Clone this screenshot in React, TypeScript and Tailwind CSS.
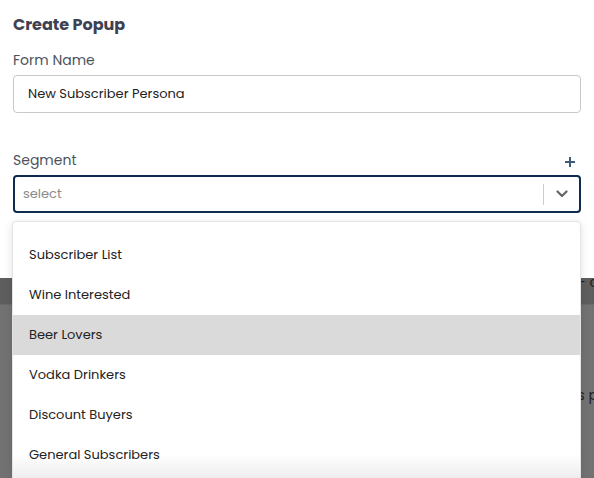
import React from "react";

const segments = [
  "Subscriber List",
  "Wine Interested",
  "Beer Lovers",
  "Vodka Drinkers",
  "Discount Buyers",
  "General Subscribers",
];

function Chevron() {
  return (
    <svg width="12" height="8" viewBox="0 0 12 8" fill="none">
      <path d="M1.5 1.5 6 6l4.5-4.5" stroke="#666" strokeWidth="2.2" strokeLinecap="round" strokeLinejoin="round" />
    </svg>
  );
}

function Plus() {
  return (
    <svg width="12" height="12" viewBox="0 0 12 12" fill="none">
      <path d="M6 1v10M1 6h10" stroke="#3e5a78" strokeWidth="2" />
    </svg>
  );
}

export default function App() {
  const font = { fontFamily: "Poppins, Inter, 'Noto Sans', sans-serif" };
  return (
    <div className="relative w-[594px] h-[478px] overflow-hidden bg-white" style={font}>
      {/* form card */}
      <div className="h-[278px] bg-white px-[13px] pt-[14px]">
        <h1 className="text-[16px] leading-[22px] font-bold text-[#3d4152]">Create Popup</h1>
        <label className="mt-[15px] block text-[14px] leading-[18px] text-[#4b5260]">Form Name</label>
        <div className="mt-[6px] flex h-[38px] w-[568px] items-center rounded-[4px] border border-[#c9c9c9] px-[14px] text-[13px] text-[#222]">
          New Subscriber Persona
        </div>
        <div className="mt-[38px] flex w-[568px] items-end justify-between">
          <span className="text-[14px] leading-[18px] text-[#4b5260]">Segment</span>
          <span className="mr-[5px] mb-[1px]"><Plus /></span>
        </div>
        <div className="mt-[6px] flex h-[38px] w-[568px] items-center rounded-[4px] border-2 border-[#0d2b4e] pl-[8px]">
          <span className="flex-1 text-[13px] text-[#8a8a8a]">select</span>
          <span className="h-[21px] w-px bg-[#cccccc]" />
          <span className="flex w-[35px] justify-center"><Chevron /></span>
        </div>
      </div>

      {/* dimmed page behind */}
      <div className="relative h-[200px] bg-[#727272]">
        <div className="h-[27px] border-b border-[#6a6a6a] bg-[#5e5e5e]" />
        <span className="absolute right-[-4px] top-[-6px] text-[14px] text-[#222]">- c</span>
        <span className="absolute right-[-4px] top-[107px] text-[14px] text-[#222]">s p</span>
      </div>

      {/* segment options */}
      <div className="absolute left-[12px] top-[221px] w-[569px] h-[270px] rounded-[4px] border border-[#e4e4e4] bg-white pt-[13px] shadow-[0_2px_8px_rgba(0,0,0,0.12)]">
        <div className="pointer-events-none absolute inset-x-0 top-[232px] h-[26px] bg-gradient-to-b from-white to-[#ececec]" />
        {segments.map((s) => (
          <div
            key={s}
            className={`relative flex h-[40px] items-center px-[16px] text-[13px] text-[#222] ${s === "Beer Lovers" ? "bg-[#dadada]" : ""}`}
          >
            {s}
          </div>
        ))}
      </div>
    </div>
  );
}
